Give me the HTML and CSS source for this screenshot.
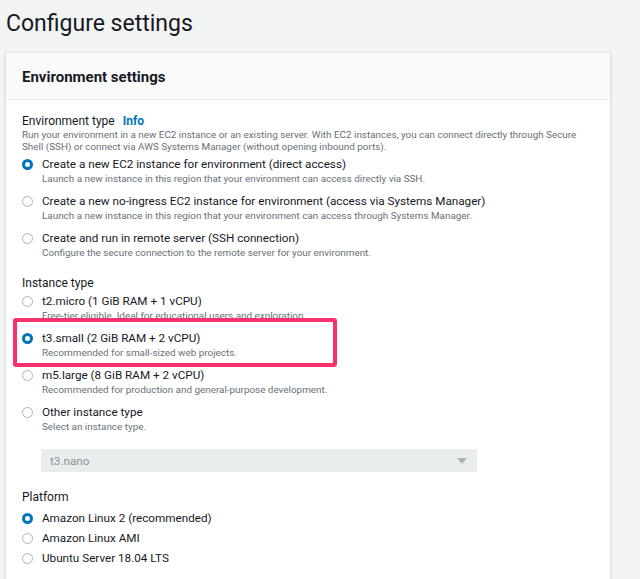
FILE: index.html
```html
<!DOCTYPE html>
<html lang="en">
<head>
<meta charset="utf-8">
<title>Configure settings</title>
<link rel="stylesheet" href="styles.css">
</head>
<body>
<h1 class="page-title">Configure settings</h1>
<section class="card">
  <header class="card-header"><h2>Environment settings</h2></header>
  <div class="card-body">
    <div class="field">
      <div class="field-label">Environment type <a class="info">Info</a></div>
      <p class="field-desc">Run your environment in a new EC2 instance or an existing server. With EC2 instances, you can connect directly through Secure Shell (SSH) or connect via AWS Systems Manager (without opening inbound ports).</p>
      <div class="options">
        <div class="option"><span class="radio checked"></span><div class="opt-text"><div class="opt-label">Create a new EC2 instance for environment (direct access)</div><div class="opt-sub">Launch a new instance in this region that your environment can access directly via SSH.</div></div></div>
        <div class="option"><span class="radio"></span><div class="opt-text"><div class="opt-label">Create a new no-ingress EC2 instance for environment (access via Systems Manager)</div><div class="opt-sub">Launch a new instance in this region that your environment can access through Systems Manager.</div></div></div>
        <div class="option"><span class="radio"></span><div class="opt-text"><div class="opt-label">Create and run in remote server (SSH connection)</div><div class="opt-sub">Configure the secure connection to the remote server for your environment.</div></div></div>
      </div>
    </div>
    <div class="field field-instance">
      <div class="field-label">Instance type</div>
      <div class="options options-tight">
        <div class="option"><span class="radio"></span><div class="opt-text"><div class="opt-label">t2.micro (1 GiB RAM + 1 vCPU)</div><div class="opt-sub">Free-tier eligible. Ideal for educational users and exploration.</div></div></div>
        <div class="option highlighted"><span class="radio checked"></span><div class="opt-text"><div class="opt-label">t3.small (2 GiB RAM + 2 vCPU)</div><div class="opt-sub">Recommended for small-sized web projects.</div></div></div>
        <div class="option"><span class="radio"></span><div class="opt-text"><div class="opt-label">m5.large (8 GiB RAM + 2 vCPU)</div><div class="opt-sub">Recommended for production and general-purpose development.</div></div></div>
        <div class="option"><span class="radio"></span><div class="opt-text"><div class="opt-label">Other instance type</div><div class="opt-sub">Select an instance type.</div></div></div>
      </div>
      <div class="select"><span>t3.nano</span><span class="caret"></span></div>
    </div>
    <div class="field field-platform">
      <div class="field-label">Platform</div>
      <div class="options options-simple">
        <div class="option"><span class="radio checked"></span><div class="opt-label">Amazon Linux 2 (recommended)</div></div>
        <div class="option"><span class="radio"></span><div class="opt-label">Amazon Linux AMI</div></div>
        <div class="option"><span class="radio"></span><div class="opt-label">Ubuntu Server 18.04 LTS</div></div>
      </div>
    </div>
  </div>
</section>
</body>
</html>
```
FILE: styles.css
```css
*, *::before, *::after { box-sizing: border-box; }
html, body { margin: 0; padding: 0; }
body {
  background: #f2f3f3;
  font-family: Roboto, "Open Sans", sans-serif;
  color: #16191f;
  width: 640px;
  height: 579px;
  overflow: hidden;
}
.page-title {
  margin: 0;
  padding: 8px 0 0 6px;
  height: 52px;
  font-size: 23px;
  font-weight: 400;
  line-height: 32px;
  color: #16191f;
}
.card {
  margin-left: 5px;
  width: 606px;
  height: 540px;
  background: #fff;
  border: 1px solid #e4e7e7;
  box-shadow: 0 1px 2px rgba(0,28,36,0.15);
}
.card-header {
  height: 47px;
  background: #fafafa;
  border-bottom: 1px solid #eaeded;
  display: flex;
  align-items: center;
  padding: 2px 0 0 16px;
}
.card-header h2 {
  margin: 0;
  font-size: 15px;
  font-weight: 700;
  color: #16191f;
}
.card-body {
  padding: 13px 16px 0 16px;
}
.field-label {
  font-size: 12px;
  line-height: 16px;
  color: #16191f;
}
.info {
  color: #0073bb;
  font-weight: 700;
  margin-left: 5px;
}
.field-desc {
  margin: 0;
  font-size: 9.9px;
  line-height: 12px;
  color: #687078;
}
.options {
  display: flex;
  flex-direction: column;
  gap: 7px;
  margin-top: 3px;
}
.options-tight { margin-top: 2px; }
.option {
  display: flex;
  align-items: flex-start;
}
.radio {
  flex: none;
  width: 11px;
  height: 11px;
  border-radius: 50%;
  border: 1px solid #aab7b8;
  margin-top: 2.5px;
  margin-right: 9px;
  background: #fff;
}
.radio.checked {
  border: 3.5px solid #0073bb;
}
.opt-label {
  font-size: 11.7px;
  line-height: 16px;
  color: #16191f;
}
.opt-sub {
  font-size: 9.9px;
  line-height: 14px;
  color: #687078;
}
.field-instance { margin-top: 15px; }
.highlighted {
  position: relative;
  z-index: 0;
}
.highlighted::before {
  content: "";
  position: absolute;
  left: -9px;
  top: -12px;
  width: 324px;
  height: 49px;
  border: 4px solid #f7316d;
  border-radius: 3px;
  background: #fff;
  z-index: -1;
}
.select {
  margin: 15px 0 0 19px;
  width: 436px;
  height: 23px;
  background: #eaeded;
  display: flex;
  align-items: center;
  justify-content: space-between;
  padding: 0 10px 0 9px;
  font-size: 11.7px;
  color: #879596;
}
.caret {
  width: 0;
  height: 0;
  border-left: 5px solid transparent;
  border-right: 5px solid transparent;
  border-top: 6px solid #aab7b8;
}
.field-platform { margin-top: 17px; }
.options-simple {
  gap: 0;
  margin-top: 3px;
}
.options-simple .option {
  align-items: center;
  height: 20px;
}
.options-simple .radio { margin-top: 0; }
```
